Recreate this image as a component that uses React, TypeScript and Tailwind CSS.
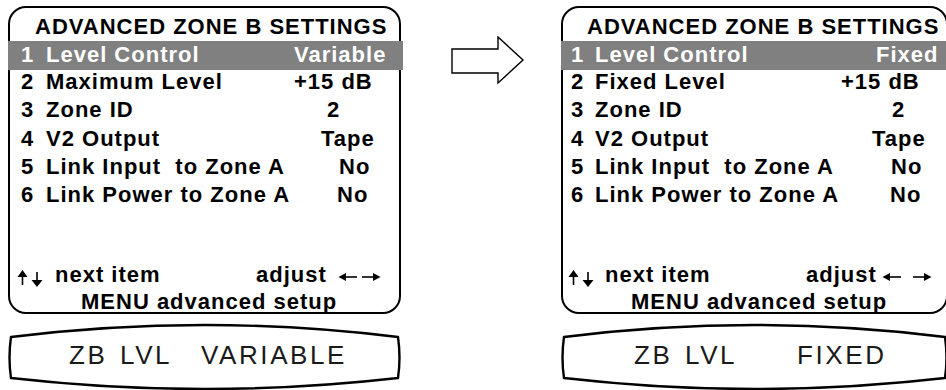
import React from "react";

type Row = { n: string; label: string; value: string; pad: number };

const leftRows: Row[] = [
  { n: "2", label: "Maximum Level", value: "+15 dB", pad: 0 },
  { n: "3", label: "Zone ID", value: "2", pad: 33 },
  { n: "4", label: "V2 Output", value: "Tape", pad: 27 },
  { n: "5", label: "Link Input  to Zone A", value: "No", pad: 45 },
  { n: "6", label: "Link Power to Zone A", value: "No", pad: 43 },
];

const rightRows: Row[] = [
  { n: "2", label: "Fixed Level", value: "+15 dB", pad: 0 },
  { n: "3", label: "Zone ID", value: "2", pad: 51 },
  { n: "4", label: "V2 Output", value: "Tape", pad: 31 },
  { n: "5", label: "Link Input  to Zone A", value: "No", pad: 50 },
  { n: "6", label: "Link Power to Zone A", value: "No", pad: 49 },
];

// small up/down arrow pair from the OSD font
function UpDown() {
  return (
    <svg width="26" height="18" viewBox="0 0 26 18" className="shrink-0 self-start mt-[10px]">
      <polygon points="0.5,7 10.5,7 5.5,0" fill="black" />
      <line x1="5.5" y1="6" x2="5.5" y2="15" stroke="black" strokeWidth="1.6" />
      <polygon points="14.5,10 25.5,10 20,17" fill="black" />
      <line x1="20" y1="2" x2="20" y2="11" stroke="black" strokeWidth="1.6" />
    </svg>
  );
}

function LeftRight({ gap }: { gap: number }) {
  const w = 19 + gap + 19;
  return (
    <svg width={w} height="10" viewBox={`0 0 ${w} 10`} className="shrink-0 self-start mt-[12px]">
      <polygon points="0.5,5 8,1 8,9" fill="black" />
      <line x1="7" y1="5" x2="19" y2="5" stroke="black" strokeWidth="1.6" />
      <line x1={19 + gap} y1="5" x2={w - 7} y2="5" stroke="black" strokeWidth="1.6" />
      <polygon points={`${w - 8},1 ${w - 8},9 ${w - 0.5},5`} fill="black" />
    </svg>
  );
}

function Panel({
  width,
  titlePad,
  rowPad,
  numW,
  labelW,
  current,
  currentPad,
  rows,
  footPad,
  nextGap,
  arrowGap,
  adjustGap,
  menuPad,
}: {
  width: string;
  titlePad: string;
  rowPad: string;
  numW: string;
  labelW: string;
  current: string;
  currentPad: number;
  rows: Row[];
  footPad: string;
  nextGap: string;
  arrowGap: number;
  adjustGap: string;
  menuPad: string;
}) {
  return (
    <div className={`${width} h-[308px] shrink-0 border-2 border-black rounded-[18px] flex flex-col font-['Liberation_Sans',Arial,sans-serif] font-bold text-[22px] tracking-[1px] text-black`}>
      <div className={`${titlePad} pt-[5px] leading-[28px] whitespace-nowrap`}>ADVANCED ZONE B SETTINGS</div>
      <div className={`-ml-[2px] -mr-[4px] h-[29px] leading-[27px] bg-[#808080] text-white flex whitespace-nowrap ${rowPad}`}>
        <span className={`${numW} ml-[2px] shrink-0`}>1</span>
        <span className={`${labelW} shrink-0`}>Level Control</span>
        <span style={{ paddingLeft: currentPad }}>{current}</span>
      </div>
      <div className="-mt-[2px] flex flex-col">
        {rows.map((r) => (
          <div key={r.n} className={`flex leading-[28.3px] whitespace-pre ${rowPad}`}>
            <span className={`${numW} shrink-0`}>{r.n}</span>
            <span className={`${labelW} shrink-0`}>{r.label}</span>
            <span style={{ paddingLeft: r.pad }}>{r.value}</span>
          </div>
        ))}
      </div>
      <div className="mt-auto">
        <div className={`flex h-[30px] leading-[30px] whitespace-nowrap ${footPad}`}>
          <UpDown />
          <span className={`${nextGap} w-[201px] shrink-0`}>next item</span>
          <span>adjust</span>
          <span className={adjustGap}>
            <LeftRight gap={arrowGap} />
          </span>
        </div>
        <div className={`mt-[2px] leading-[20px] whitespace-nowrap ${menuPad}`}>MENU advanced setup</div>
      </div>
    </div>
  );
}

function Lcd({ w, pad, zbW, lvlW, value }: { w: number; pad: string; zbW: string; lvlW: string; value: string }) {
  const m = w / 2;
  return (
    <div className="relative mt-[9px] h-[67px] shrink-0" style={{ width: w }}>
      <svg width={w} height="67" viewBox={`0 0 ${w} 67`} className="absolute inset-0 overflow-visible">
        <path
          d={`M 3 14 Q ${m} -10 ${w - 3} 14 Q ${w} 34.5 ${w - 3} 55 Q ${m} 77 3 55 Q 0 34.5 3 14 Z`}
          fill="white"
          stroke="black"
          strokeWidth="2.4"
        />
      </svg>
      <div className={`relative flex pt-[19px] leading-[26px] text-[26px] tracking-[2.6px] font-['Liberation_Sans',Arial,sans-serif] text-[#1a1a1a] whitespace-nowrap ${pad}`}>
        <span className={`${zbW} shrink-0`}>ZB</span>
        <span className={`${lvlW} shrink-0`}>LVL</span>
        <span>{value}</span>
      </div>
    </div>
  );
}

export default function App() {
  return (
    <div className="w-[946px] h-[390px] overflow-hidden bg-white flex items-start pl-[8px] pt-[6px]">
      <div className="flex flex-col w-[393px] shrink-0">
        <Panel
          width="w-[393px]"
          titlePad="pl-[25px]"
          rowPad="pl-[11px]"
          numW="w-[25px]"
          labelW="w-[248px]"
          current="Variable"
          currentPad={0}
          rows={leftRows}
          footPad="pl-[7px]"
          nextGap="ml-[12px]"
          arrowGap={5}
          adjustGap="ml-[11px]"
          menuPad="pl-[71px]"
        />
        <Lcd w={393} pad="pl-[61px]" zbW="w-[51px]" lvlW="w-[81px]" value="VARIABLE" />
      </div>

      <svg width="74" height="50" viewBox="0 0 74 50" className="shrink-0 ml-[50px] mt-[30px]">
        <polygon points="1,13 47,13 47,1 72,24 47,47 47,37 1,37" fill="white" stroke="black" strokeWidth="1.4" />
      </svg>

      <div className="flex flex-col w-[387px] shrink-0 ml-[36px]">
        <Panel
          width="w-[387px]"
          titlePad="pl-[24px]"
          rowPad="pl-[8px]"
          numW="w-[24px]"
          labelW="w-[246px]"
          current="Fixed"
          currentPad={35}
          rows={rightRows}
          footPad="pl-[5px]"
          nextGap="ml-[11px]"
          arrowGap={12}
          adjustGap="ml-[5px]"
          menuPad="pl-[68px]"
        />
        <Lcd w={387} pad="pl-[73px]" zbW="w-[51px]" lvlW="w-[112px]" value="FIXED" />
      </div>
    </div>
  );
}
